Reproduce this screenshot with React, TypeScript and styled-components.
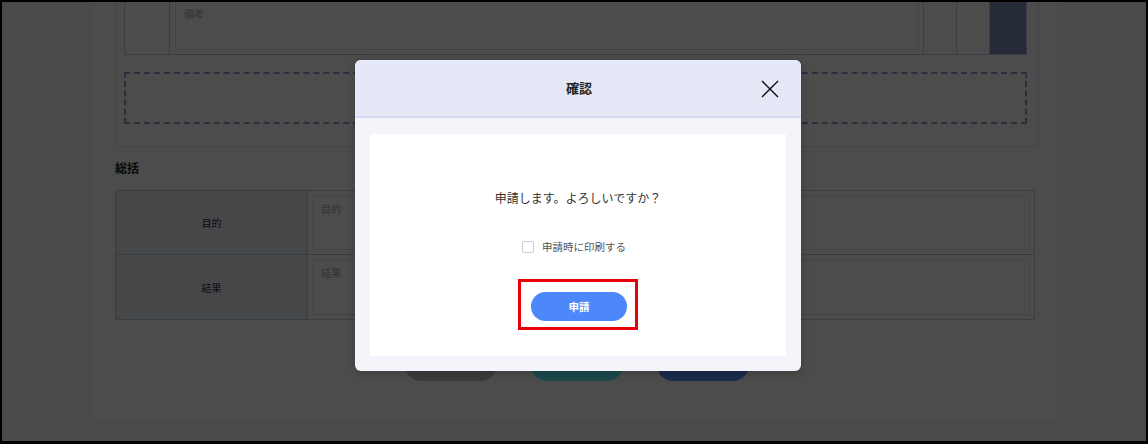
import { useState } from 'react'
import styled, { createGlobalStyle } from 'styled-components'

const GlobalStyle = createGlobalStyle`
  * { box-sizing: border-box; }
  html, body { margin: 0; padding: 0; }
  body {
    font-family: "Noto Sans CJK JP", "Noto Sans", sans-serif;
    background: #000;
  }
`

const Frame = styled.div`
  position: relative;
  width: 1148px;
  height: 444px;
  border: 2px solid #000;
  border-bottom-width: 3px;
  overflow: hidden;
  background: #f7f7f9;
`

const Page = styled.div`
  display: flex;
  justify-content: center;
  padding: 0 84px 0 90px;
`

const Card = styled.div`
  width: 970px;
  margin-top: -6px;
  padding: 0 23px 40px;
  background: #fff;
  display: flex;
  flex-direction: column;
`

const Section = styled.div`
  border: 1px solid #e3e4ea;
  border-top: none;
  border-radius: 0 0 4px 4px;
  padding: 0 11px 22px 8px;
  display: flex;
  flex-direction: column;
  gap: 17px;
`

const DetailRow = styled.div`
  display: grid;
  grid-template-columns: 45px 1fr 33px 33px 36px;
  height: 59px;
  border: 1px solid #c3c8e4;
  border-top: none;
`

const Cell = styled.div<{ $fill?: string }>`
  border-right: 1px solid #c3c8e4;
  background: ${(p) => p.$fill || 'transparent'};
  &:last-child { border-right: none; }
`

const InputCell = styled.div`
  padding: 0 4px 4px 5px;
  border-right: 1px solid #c3c8e4;
  display: flex;
`

const FakeInput = styled.div<{ $top?: number }>`
  flex: 1;
  border: 1px solid #e6e7ee;
  border-top-color: ${(p) => (p.$top ? 'transparent' : '#e6e7ee')};
  padding: ${(p) => p.$top || 6}px 8px 6px;
  font-size: 10px;
  line-height: 14px;
  color: #a9a9ad;
`

const DropZone = styled.div`
  height: 52px;
  border: 2px dashed #959bd0;
`

const Heading = styled.h3`
  margin: 12px 0 13px;
  font-size: 12px;
  font-weight: 700;
  color: #222;
  line-height: 18px;
`

const SummaryTable = styled.div`
  display: grid;
  grid-template-columns: 192px 1fr;
  border: 1px solid #c3c8e4;
  margin-right: 4px;
`

const SummaryLabel = styled.div<{ $last?: boolean }>`
  height: 64px;
  background: #eaedf3;
  border-right: 1px solid #c3c8e4;
  border-bottom: ${(p) => (p.$last ? 'none' : '1px solid #c3c8e4')};
  display: flex;
  align-items: center;
  justify-content: center;
  font-size: 10px;
  color: #333;
`

const SummaryValue = styled.div<{ $last?: boolean }>`
  height: 64px;
  padding: 4px;
  border-bottom: ${(p) => (p.$last ? 'none' : '1px solid #c3c8e4')};
  display: flex;
`

const ActionBar = styled.div`
  display: flex;
  justify-content: center;
  gap: 34px;
  margin-top: 29px;
`

const PageButton = styled.div<{ $bg: string }>`
  width: 92px;
  height: 32px;
  border-radius: 16px;
  background: ${(p) => p.$bg};
`

const Overlay = styled.div`
  position: absolute;
  inset: 0;
  background: rgba(0, 0, 0, 0.7);
  display: flex;
  align-items: center;
  justify-content: center;
  padding: 0 0 13px 8px;
`

const Modal = styled.div`
  width: 446px;
  border-radius: 6px;
  overflow: hidden;
  background: #f4f5fa;
  box-shadow: 0 2px 10px rgba(0, 0, 0, 0.2);
`

const ModalHeader = styled.div`
  position: relative;
  height: 58px;
  background: #e5e8f6;
  border-bottom: 2px solid #d6dbf1;
  display: flex;
  align-items: center;
  justify-content: center;
`

const ModalTitle = styled.div`
  font-size: 13px;
  font-weight: 700;
  color: #222;
  padding-left: 2px;
`

const CloseButton = styled.button`
  position: absolute;
  right: 21px;
  top: 19px;
  width: 20px;
  height: 20px;
  padding: 0;
  border: none;
  background: none;
  cursor: pointer;
  display: flex;
`

const ModalBody = styled.div`
  padding: 16px 15px 15px;
`

const Panel = styled.div`
  height: 222px;
  background: #fff;
  display: flex;
  flex-direction: column;
  align-items: center;
  padding-top: 55px;
`

const Message = styled.p`
  margin: 0;
  font-size: 12px;
  line-height: 18px;
  color: #333;
`

const CheckRow = styled.label`
  margin-top: 32px;
  margin-right: 8px;
  display: flex;
  align-items: center;
  gap: 8px;
  font-size: 10.5px;
  line-height: 16px;
  color: #555;
  cursor: pointer;
`

const Box = styled.span<{ $on: boolean }>`
  width: 12px;
  height: 12px;
  border: 1px solid #cfcfd4;
  border-radius: 2px;
  background: ${(p) => (p.$on ? '#4d88fb' : '#fff')};
`

const Highlight = styled.div`
  margin-top: 24px;
  border: 3px solid #e8000b;
  padding: 10px 8px 6px 10px;
`

const SubmitButton = styled.button`
  width: 96px;
  height: 29px;
  border: none;
  border-radius: 15px;
  background: #4d88fb;
  color: #fff;
  font-family: inherit;
  font-size: 10.5px;
  font-weight: 700;
  cursor: pointer;
`

export default function App() {
  const [print, setPrint] = useState(false)

  return (
    <>
      <GlobalStyle />
      <Frame>
        <Page>
          <Card>
            <Section>
              <DetailRow>
                <Cell />
                <InputCell>
                  <FakeInput $top={10}>備考</FakeInput>
                </InputCell>
                <Cell />
                <Cell />
                <Cell $fill="#7b8cb4" />
              </DetailRow>
              <DropZone />
            </Section>

            <Heading>総括</Heading>
            <SummaryTable>
              <SummaryLabel>目的</SummaryLabel>
              <SummaryValue>
                <FakeInput>目的</FakeInput>
              </SummaryValue>
              <SummaryLabel $last>結果</SummaryLabel>
              <SummaryValue $last>
                <FakeInput>結果</FakeInput>
              </SummaryValue>
            </SummaryTable>

            <ActionBar>
              <PageButton $bg="#c2c5c5" />
              <PageButton $bg="#61f7ff" />
              <PageButton $bg="#5a8cff" />
            </ActionBar>
          </Card>
        </Page>

        <Overlay>
          <Modal>
            <ModalHeader>
              <ModalTitle>確認</ModalTitle>
              <CloseButton aria-label="close">
                <svg width="20" height="20" viewBox="0 0 20 20" fill="none" stroke="#111" strokeWidth="1.4">
                  <path d="M2 2 L18 18 M18 2 L2 18" />
                </svg>
              </CloseButton>
            </ModalHeader>
            <ModalBody>
              <Panel>
                <Message>申請します。よろしいですか？</Message>
                <CheckRow onClick={() => setPrint(!print)}>
                  <Box $on={print} />
                  申請時に印刷する
                </CheckRow>
                <Highlight>
                  <SubmitButton>申請</SubmitButton>
                </Highlight>
              </Panel>
            </ModalBody>
          </Modal>
        </Overlay>
      </Frame>
    </>
  )
}
